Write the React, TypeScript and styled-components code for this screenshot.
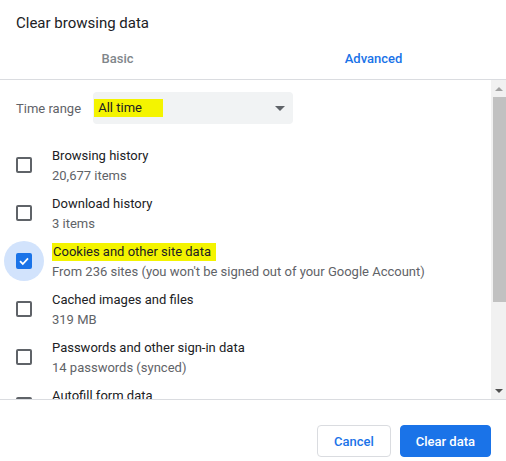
import React from "react";
import styled, { createGlobalStyle } from "styled-components";

const Global = createGlobalStyle`
  html, body { margin: 0; padding: 0; background: #fff; }
  body { font-family: Roboto, "Noto Sans", Arial, sans-serif; -webkit-font-smoothing: antialiased; }
  * { box-sizing: border-box; }
`;

const Dialog = styled.div`
  width: 506px;
  height: 461px;
  display: flex;
  flex-direction: column;
  overflow: hidden;
  background: #fff;
`;

const Title = styled.h1`
  margin: 0;
  padding: 13px 16px 0;
  font-size: 15px;
  line-height: 20px;
  font-weight: 400;
  color: #202124;
`;

const TabBar = styled.div`
  height: 47px;
  padding-top: 5px;
  display: grid;
  grid-template-columns: 235px 277px;
  align-items: center;
  border-bottom: 1px solid #dadce0;
  flex-shrink: 0;
`;

const Tab = styled.div<{ $active?: boolean }>`
  text-align: center;
  font-size: 13px;
  font-weight: 500;
  line-height: 20px;
  color: ${(p) => (p.$active ? "#1a73e8" : "#80868b")};
`;

const Body = styled.div`
  height: 320px;
  display: flex;
  border-bottom: 1px solid #dadce0;
  flex-shrink: 0;
`;

const List = styled.div`
  flex: 1;
  overflow: hidden;
  padding-top: 12px;
`;

const RangeRow = styled.div`
  display: flex;
  align-items: center;
  padding-left: 16px;
  margin-bottom: 17px;
`;

const RangeLabel = styled.span`
  font-size: 13px;
  color: #5f6368;
  width: 77px;
`;

const Select = styled.div`
  width: 200px;
  height: 32px;
  background: #f1f3f4;
  border-radius: 4px;
  display: flex;
  align-items: center;
  justify-content: space-between;
  padding: 0 8px 0 1px;
  font-size: 13px;
  color: #202124;
`;

const Mark = styled.span<{ $pad?: number }>`
  background: #f4f400;
  padding: 1px ${(p) => p.$pad ?? 4}px 2px 1px;
`;

const Caret = styled.span`
  width: 0;
  height: 0;
  border-left: 5px solid transparent;
  border-right: 5px solid transparent;
  border-top: 5px solid #5f6368;
`;

const Row = styled.div`
  height: 48px;
  display: flex;
  align-items: center;
  padding-left: 4px;
`;

const Halo = styled.div<{ $on?: boolean }>`
  width: 40px;
  height: 40px;
  border-radius: 50%;
  background: ${(p) => (p.$on ? "#d2e3fc" : "transparent")};
  display: flex;
  align-items: center;
  justify-content: center;
  margin-right: 8px;
  flex-shrink: 0;
`;

const Box = styled.div<{ $on?: boolean }>`
  width: 16px;
  height: 16px;
  border-radius: 2px;
  border: 2px solid ${(p) => (p.$on ? "#1a73e8" : "#5f6368")};
  background: ${(p) => (p.$on ? "#1a73e8" : "transparent")};
  display: flex;
  align-items: center;
  justify-content: center;
`;

const Texts = styled.div`
  display: flex;
  flex-direction: column;
  font-size: 13px;
  line-height: 20px;
  padding-top: 1px;
  white-space: nowrap;
`;

const Main = styled.span`
  color: #202124;
`;

const Sub = styled.span`
  color: #5f6368;
`;

const Scrollbar = styled.div`
  width: 15px;
  background: #f1f1f1;
  display: flex;
  flex-direction: column;
  align-items: center;
`;

const ArrowBtn = styled.div`
  height: 17px;
  width: 100%;
  display: flex;
  align-items: center;
  justify-content: center;
`;

const Tri = styled.span<{ $up?: boolean }>`
  width: 0;
  height: 0;
  border-left: 4px solid transparent;
  border-right: 4px solid transparent;
  ${(p) =>
    p.$up
      ? "border-bottom: 4px solid #a3a3a3;"
      : "border-top: 4px solid #505050;"}
`;

const Thumb = styled.div`
  height: 205px;
  width: 13px;
  margin-left: 2px;
  background: #c1c1c1;
`;

const Track = styled.div`
  flex: 1;
`;

const Footer = styled.div`
  display: flex;
  justify-content: flex-end;
  gap: 9px;
  padding: 25px 15px 0;
`;

const Button = styled.button<{ $primary?: boolean }>`
  height: 32px;
  padding: 0 ${(p) => (p.$primary ? 15 : 16)}px;
  border-radius: 4px;
  font-family: inherit;
  font-size: 13px;
  font-weight: 500;
  cursor: pointer;
  border: 1px solid ${(p) => (p.$primary ? "#1a73e8" : "#dadce0")};
  background: ${(p) => (p.$primary ? "#1a73e8" : "#fff")};
  color: ${(p) => (p.$primary ? "#fff" : "#1a73e8")};
`;

const items: { title: React.ReactNode; sub: string; on?: boolean }[] = [
  { title: "Browsing history", sub: "20,677 items" },
  { title: "Download history", sub: "3 items" },
  {
    title: <Mark $pad={5}>Cookies and other site data</Mark>,
    sub: "From 236 sites (you won't be signed out of your Google Account)",
    on: true,
  },
  { title: "Cached images and files", sub: "319 MB" },
  { title: "Passwords and other sign-in data", sub: "14 passwords (synced)" },
  { title: "Autofill form data", sub: "" },
];

export default function App() {
  return (
    <>
      <Global />
      <Dialog>
        <Title>Clear browsing data</Title>
        <TabBar>
          <Tab>Basic</Tab>
          <Tab $active>Advanced</Tab>
        </TabBar>
        <Body>
          <List>
            <RangeRow>
              <RangeLabel>Time range</RangeLabel>
              <Select>
                <Mark $pad={21}>&nbsp;All time</Mark>
                <Caret />
              </Select>
            </RangeRow>
            {items.map((it, i) => (
              <Row key={i}>
                <Halo $on={it.on}>
                  <Box $on={it.on}>
                    {it.on && (
                      <svg width="12" height="12" viewBox="0 0 12 12">
                        <polyline
                          points="2,6.2 4.8,9 10,3.4"
                          fill="none"
                          stroke="#fff"
                          strokeWidth="1.8"
                        />
                      </svg>
                    )}
                  </Box>
                </Halo>
                <Texts>
                  <Main>{it.title}</Main>
                  <Sub>{it.sub || "\u00a0"}</Sub>
                </Texts>
              </Row>
            ))}
          </List>
          <Scrollbar>
            <ArrowBtn>
              <Tri $up />
            </ArrowBtn>
            <Thumb />
            <Track />
            <ArrowBtn>
              <Tri />
            </ArrowBtn>
          </Scrollbar>
        </Body>
        <Footer>
          <Button>Cancel</Button>
          <Button $primary>Clear data</Button>
        </Footer>
      </Dialog>
    </>
  );
}
